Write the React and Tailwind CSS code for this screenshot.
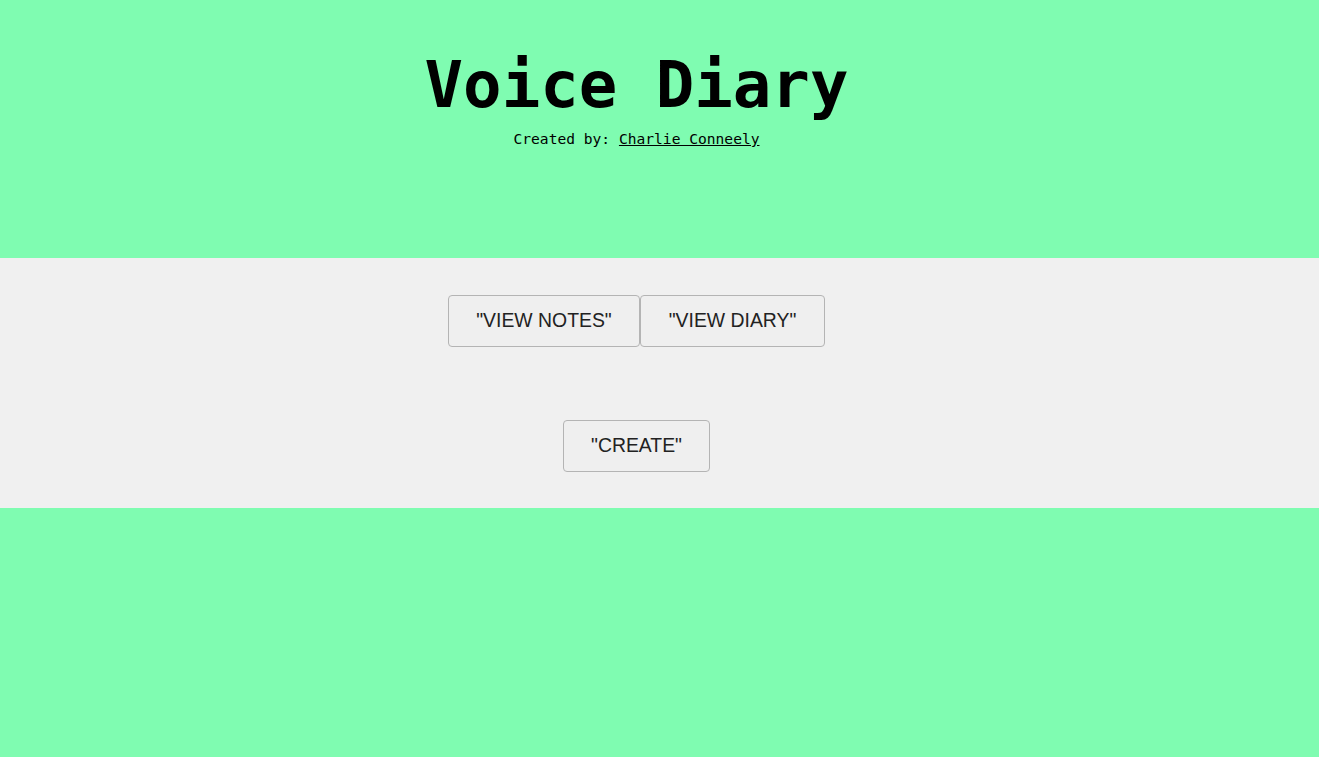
import React from 'react';

const mono = { fontFamily: '"DejaVu Sans Mono", "Liberation Mono", monospace' };

function NavButton({ label, className = '' }) {
  return (
    <button
      className={`h-[52px] whitespace-nowrap bg-[#efefef] border border-[#b4b4b4] rounded-[4px] text-[19.4px] leading-none text-[#222] font-['Liberation_Sans'] ${className}`}
    >
      {label}
    </button>
  );
}

export default function App() {
  return (
    <div className="min-h-screen w-full bg-[#7ffcb1]">
      {/* Header */}
      <header className="h-[258px] w-[1273px] flex flex-col items-center pt-[53px]">
        <h1 className="text-[64px] font-bold leading-none text-black" style={mono}>
          Voice Diary
        </h1>
        <p className="mt-[15px] text-[14.6px] leading-none text-black" style={mono}>
          Created by: <a href="#" className="underline">Charlie Conneely</a>
        </p>
      </header>

      {/* Menu band */}
      <section className="h-[250px] bg-[#f0f0f0]">
        <div className="w-[1273px] flex flex-col items-center pt-[37px]">
          <div className="flex">
            <NavButton label={'"VIEW NOTES"'} className="w-[192px]" />
            <NavButton label={'"VIEW DIARY"'} className="w-[185px]" />
          </div>
          <NavButton label={'"CREATE"'} className="w-[147px] mt-[73px]" />
        </div>
      </section>
    </div>
  );
}
